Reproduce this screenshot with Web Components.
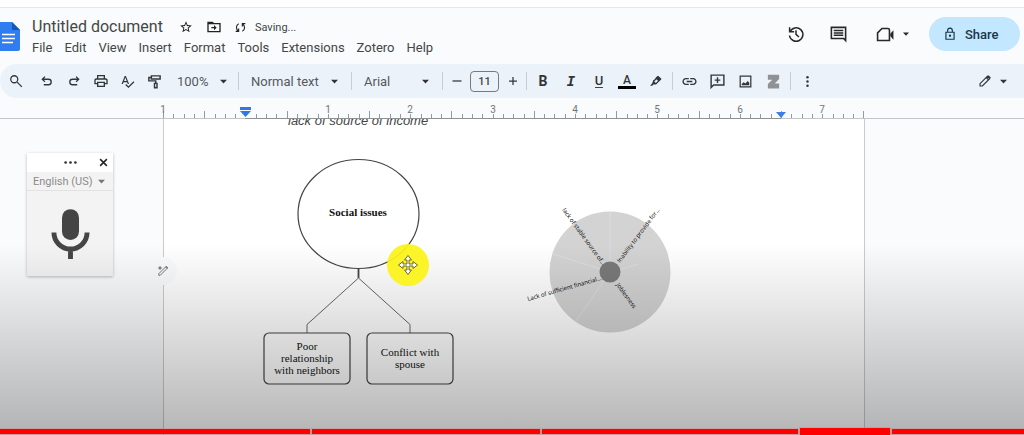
<!DOCTYPE html>
<html lang="en">
<head>
<meta charset="utf-8">
<title>Untitled document</title>
<style>
html,body{margin:0;height:100%;overflow:hidden}
body{font-family:Roboto,"Liberation Sans",sans-serif;font-size:13px;color:#444746;background:#f9fbfd}
</style>
</head>
<body>
<docs-app></docs-app>
<script>
const define = (name, html, setup) => {
  const tpl = document.createElement('template');
  tpl.innerHTML = html;
  customElements.define(name, class extends HTMLElement {
    connectedCallback() {
      if (this.shadowRoot) return;
      this.attachShadow({mode: 'open'}).append(tpl.content.cloneNode(true));
      if (setup) setup(this, this.shadowRoot);
    }
  });
};
const stroke = (d, w = 2) => `<path d="${d}" fill="none" stroke="currentColor" stroke-width="${w}"/>`;
const fill = d => `<path d="${d}"/>`;
const ICONS = {
  star: fill('M22 9.24l-7.19-.62L12 2 9.19 8.63 2 9.24l5.46 4.73L5.82 21 12 17.27 18.18 21l-1.63-7.03L22 9.24zM12 15.4l-3.76 2.27 1-4.28-3.32-2.88 4.38-.38L12 6.1l1.71 4.04 4.38.38-3.32 2.88 1 4.28L12 15.4z'),
  folder: fill('M20 6h-8l-2-2H2v16h20V6zm0 12H4V8h16v10zM12 17l4-4-4-4v3H8v2h4z'),
  sync: stroke('M8 4C1.500 7.500 2 15.500 7 19.500M1.500 20.500H8V14M16 20C22.500 16.500 22 8.500 17 4.500M22.500 3.500H16V10', 2.4),
  history: stroke('M3.500 3v6h6M4 9a9 9 0 1 1-.7 5M12 7v5.500l4 3.500'),
  comment: fill('M22 2H2v16h16l4 4V2zM20 4v13.170L18.830 16H4V4h16zM6 12h12v2H6zm0-3h12v2H6zm0-3h12v2H6z'),
  video: stroke('M7.500 4.500H15a2 2 0 0 1 2 2V19.500H2V10z') + fill('M18 11l4-4.500v12L18 14z'),
  lock: stroke('M5 9h14v12H5zM8 9V6a4 4 0 0 1 8 0v3') + '<circle cx="12" cy="15" r="2"/>',
  search: stroke('M14 14l8 8', 2.200) + '<circle cx="9" cy="9" r="6" fill="none" stroke="currentColor" stroke-width="2.200"/>',
  undo: stroke('M8.500 4.500L4 9l4.500 4.500M4 9h10.500a4.700 4.700 0 0 1 0 9.400H6.500', 2.300),
  redo: stroke('M15.500 4.500L20 9l-4.500 4.500M20 9H9.500a4.700 4.700 0 0 0 0 9.400H17.500', 2.300),
  print: fill('M19 8h-1V3H6v5H5c-1.66 0-3 1.34-3 3v6h4v4h12v-4h4v-6c0-1.66-1.34-3-3-3zM8 5h8v3H8V5zm8 14H8v-4h8v4zm2-4v-2H6v2H4v-4c0-.55.45-1 1-1h14c.55 0 1 .45 1 1v4h-2z'),
  spell: fill('M12.45 16h2.09L9.43 3H7.57L2.46 16h2.09l1.12-3h5.64l1.14 3zm-6.02-5L8.500 5.480 10.570 11H6.430zm15.160.590l-8.090 8.090L9.830 16l-1.410 1.410 5.090 5.090L23 13l-1.410-1.410z'),
  paint: stroke('M7 3h14v5H7zM7 5.500H3V11h11v4M12 15h4v7h-4z', 2.300),
  minus: stroke('M3 12h18', 2.500),
  plus: stroke('M4 12h16M12 4v16', 2.500),
  marker: stroke('M9 11L17 3l4.500 4.500L13.500 15.500z', 2.400) + fill('M15.500 2l6.500 6-4 4-6.500-6zM8 9l7 7-3 1.500H8L6 20H2l4-5z') + '<path d="M10.500 11.500l2.500 2.500" stroke="#ecf2fa" stroke-width="2"/>',
  link: fill('M3.900 12c0-1.710 1.390-3.100 3.100-3.100h4V7H7c-2.760 0-5 2.240-5 5s2.240 5 5 5h4v-1.900H7c-1.710 0-3.100-1.390-3.100-3.100zM8 13h8v-2H8v2zm9-6h-4v1.900h4c1.710 0 3.100 1.390 3.100 3.100s-1.390 3.100-3.100 3.100h-4V17h4c2.760 0 5-2.240 5-5s-2.240-5-5-5z'),
  addcomment: stroke('M3 3h18v14H6.500L3 20.500zM12 6v8M8 10h8'),
  image: stroke('M3.500 3.500h17v17h-17z') + fill('M6 18v-2l3-3 3 2 3.500-4L18 14v4z'),
  zotero: fill('M3 1h18v7l-7 7h7v8H3v-7l7-7H3z'),
  more: '<circle cx="12" cy="4" r="2.300"/><circle cx="12" cy="12" r="2.300"/><circle cx="12" cy="20" r="2.300"/>',
  dots: '<circle cx="3" cy="12" r="2.500"/><circle cx="12" cy="12" r="2.500"/><circle cx="21" cy="12" r="2.500"/>',
  pencil: stroke('M3.500 20.500v-4L16 4l4 4L7.500 20.500zM14 6l4 4', 2) + fill('M16 3.500l2-1.500 4 4-2 2z'),
  close: stroke('M3 3l18 18M21 3L3 21', 4),
  arrow: fill('M0 6h24L12 19z'),
  wand: stroke('M3.500 20.500v-3L17 4l3 3L6.500 20.500z', 2) + fill('M6 1l1.500 3.500L11 6 7.500 7.500 6 11 4.500 7.500 1 6l3.500-1.500zM16 3l3-1 3 3-1 3z'),
  mic: '<rect x="8" y="1" width="8" height="14.500" rx="4"/>' + stroke('M4.200 12a7.800 7.800 0 0 0 15.600 0M12 19.500V24.500', 2.300)
};
define('doc-icon', `<style>:host{display:inline-flex;flex:none}svg{display:block;fill:currentColor;overflow:visible}</style><svg viewBox="0 0 24 24" aria-hidden="true"></svg>`, (el, root) => {
  const svg = root.querySelector('svg'), s = el.getAttribute('size') || 16;
  svg.setAttribute('width', s); svg.setAttribute('height', s);
  svg.innerHTML = ICONS[el.getAttribute('name')];
});
define('tool-button', `<style>
:host{display:flex;flex:none;width:var(--tool-width,28px);height:28px}
button{flex:1;display:flex;align-items:center;justify-content:center;gap:8px;padding:0;border:0;background:none;font:inherit;color:inherit}
</style><button type="button"><slot></slot></button>`, (el, root) => root.querySelector('button').setAttribute('aria-label', el.getAttribute('label')));
define('drop-down', `<style>
:host{display:grid;align-items:center;flex:none}
select,doc-icon{grid-area:1/1}
select{appearance:none;width:100%;height:100%;border:0;background:none;margin:0;padding:0 20px 0 var(--pad,12px);font:inherit;color:inherit;border-radius:0}
doc-icon{justify-self:end;margin-right:var(--end,13px);pointer-events:none;color:var(--arrow,#333)}
</style><select><option></option></select><doc-icon name="arrow" size="7"></doc-icon>`, (el, root) => {
  root.querySelector('select').setAttribute('aria-label', el.getAttribute('label'));
  root.querySelector('option').textContent = el.getAttribute('value');
});
define('docs-header', `<style>
:host{display:flex;align-items:flex-start;height:56px;border-top:1px solid #e6e7ea;padding-right:4px}
.logo{flex:none;width:20px;height:30px;margin:14px 12px 0 0}
.main{flex:1}
.title{display:flex;align-items:center;height:20px;margin-top:9px}
h1{margin:0 16px 0 0;font-size:16px;line-height:20px;font-weight:400}
.title doc-icon{margin-right:13px;color:#222}
.title doc-icon.sync{margin-right:9px}
.status{font-size:11px}
nav{display:flex;gap:12px;margin-top:3px;line-height:16px}
nav a{color:inherit;text-decoration:none}
.actions{display:flex;align-items:center;height:34px;margin-top:9px;color:#262829}
.actions tool-button{--tool-width:42px}
.actions .meet{--tool-width:56px;margin-left:5px}
.share{display:flex;align-items:center;gap:8px;height:34px;width:91px;padding:0 0 0 14px;margin-left:9px;border:0;border-radius:17px;background:#c2e7ff;font:500 13px Roboto,sans-serif;color:#1b3549}
</style>
<svg class="logo" viewBox="0 0 20 30"><path d="M0 0h12l8 8v19a2 2 0 0 1-2 2H0z" fill="#2f7df0"/><path d="M12 0l8 8h-8z" fill="#1457b8"/><path d="M2 12.500h13M2 16.500h13M2 20.500h11" stroke="#fff" stroke-width="1.500"/></svg>
<div class="main">
<div class="title"><h1>Untitled document</h1><doc-icon name="star" size="14"></doc-icon><doc-icon name="folder" size="16"></doc-icon><doc-icon class="sync" name="sync" size="11"></doc-icon><span class="status">Saving...</span></div>
<nav><a href="#">File</a><a href="#">Edit</a><a href="#">View</a><a href="#">Insert</a><a href="#">Format</a><a href="#">Tools</a><a href="#">Extensions</a><a href="#">Zotero</a><a href="#">Help</a></nav>
</div>
<div class="actions">
<tool-button label="Version history"><doc-icon name="history" size="18"></doc-icon></tool-button>
<tool-button label="Comments"><doc-icon name="comment" size="19"></doc-icon></tool-button>
<tool-button class="meet" label="Join a call"><doc-icon name="video" size="19"></doc-icon><doc-icon name="arrow" size="6"></doc-icon></tool-button>
<button class="share" type="button"><doc-icon name="lock" size="14"></doc-icon>Share</button>
</div>`);
define('docs-toolbar', `<style>
:host{display:flex;align-items:center;height:34px;background:#ecf2fa;border-radius:17px 0 0 17px;padding:0 14px 0 2px;color:#333639}
.history{--tool-width:27px;display:flex}
.search{margin-right:3px}
.zoom{width:70px;--pad:9px;--end:11px}
drop-down{height:28px;color:#55595c}
.style{width:112px}.font{width:90px}
.rule{flex:none;width:1px;height:18px;background:#c9cdd2}
.size{display:flex;align-items:center;--tool-width:27px}
input{box-sizing:border-box;width:29px;height:21px;margin:0;padding:0;border:1px solid #777b7e;border-radius:4px;background:none;text-align:center;font:500 11px Roboto,sans-serif;color:#444746}
.group{display:flex;padding:0 3px 0 2px}
.b{font:700 14px Roboto,sans-serif}
.i{font:italic 700 14px "DejaVu Sans Mono",monospace}
.u{font:500 13px Roboto,sans-serif;line-height:13px;border-bottom:1px solid #444}
.a{font:500 12px Roboto,sans-serif;line-height:12px;border-bottom:3px solid #000;width:18px;text-align:center}
.z{color:#8f9193}
.mode{--tool-width:36px;margin-left:auto}
</style>
<tool-button class="search" label="Search the menus"><doc-icon name="search" size="14"></doc-icon></tool-button>
<div class="history">
<tool-button label="Undo"><doc-icon name="undo" size="14"></doc-icon></tool-button>
<tool-button label="Redo"><doc-icon name="redo" size="14"></doc-icon></tool-button>
<tool-button label="Print"><doc-icon name="print" size="16"></doc-icon></tool-button>
<tool-button label="Spelling"><doc-icon name="spell" size="15"></doc-icon></tool-button>
<tool-button label="Paint format"><doc-icon name="paint" size="15"></doc-icon></tool-button></div>
<drop-down class="zoom" label="Zoom" value="100%"></drop-down><span class="rule"></span>
<drop-down class="style" label="Styles" value="Normal text"></drop-down><span class="rule"></span>
<drop-down class="font" label="Font" value="Arial"></drop-down><span class="rule"></span>
<div class="size"><tool-button label="Decrease font size"><doc-icon name="minus" size="12"></doc-icon></tool-button><input aria-label="Font size" value="11"><tool-button label="Increase font size"><doc-icon name="plus" size="12"></doc-icon></tool-button></div><span class="rule"></span>
<div class="group">
<tool-button label="Bold"><span class="b">B</span></tool-button>
<tool-button label="Italic"><span class="i">I</span></tool-button>
<tool-button label="Underline"><span class="u">U</span></tool-button>
<tool-button label="Text color"><span class="a">A</span></tool-button>
<tool-button label="Highlight color"><doc-icon name="marker" size="13"></doc-icon></tool-button></div><span class="rule"></span>
<div class="group">
<tool-button label="Insert link"><doc-icon name="link" size="17"></doc-icon></tool-button>
<tool-button label="Add comment"><doc-icon name="addcomment" size="17"></doc-icon></tool-button>
<tool-button label="Insert image"><doc-icon name="image" size="15"></doc-icon></tool-button>
<tool-button class="z" label="Zotero"><doc-icon name="zotero" size="15"></doc-icon></tool-button></div><span class="rule"></span>
<div class="group"><tool-button label="More"><doc-icon name="more" size="13"></doc-icon></tool-button></div>
<tool-button class="mode" label="Editing mode"><doc-icon name="pencil" size="14"></doc-icon><doc-icon name="arrow" size="7"></doc-icon></tool-button>`);
define('docs-ruler', `<style>
:host{display:flex;justify-content:center;height:20px;border-bottom:1px solid #c3c6c9;padding-left:4px}
svg{flex:none;display:block;overflow:visible}
text{font:10px Roboto,sans-serif;fill:#70757a;text-anchor:middle}
</style><svg width="702" height="20"></svg>`, (el, root) => {
  const inch = 82.4; let s = '';
  for (let k = 0; k <= 68; k++) {
    if (k === 8) continue;
    const x = Math.round(k * inch / 8) + .5, h = k === 0 || k === 68 || k % 8 === 4 ? 7 : 4;
    s += `<path d="M${x} ${20 - h}V20" stroke="#95999c"/>`;
  }
  [1, '', 1, 2, 3, 4, 5, 6, 7].forEach((n, i) => { if (n) s += `<text x="${Math.round(i * inch)}" y="15">${n}</text>`; });
  s += '<path d="M82 20.500H618" stroke="#8d9194"/><path d="M77 9h11v3H77zM77 13h11l-5.500 6z" fill="#2f78e8"/><path d="M613 14h10l-5 6z" fill="#3f7de8"/>';
  root.querySelector('svg').innerHTML = s;
});
define('voice-card', `<style>
:host{display:flex;flex-direction:column;width:86px;background:#f3f3f3;box-shadow:0 1px 3px #0004;color:#333}
.bar{display:grid;grid-template-columns:1fr auto 1fr;align-items:center;height:19px;background:#fff;padding:0 5px}
.bar doc-icon{grid-column:2}
.close{grid-column:3;justify-self:end;display:flex;border:0;padding:0;background:none;color:inherit}
.close doc-icon{color:#222}
drop-down{height:18px;border-bottom:1px solid #e2e2e2;color:#8b8b8b;font-size:11px;--pad:6px;--end:8px;--arrow:#777}
.mic{display:flex;justify-content:center;border:0;background:none;padding:16px 0 18px;color:#454545}
</style>
<div class="bar"><doc-icon name="dots" size="13"></doc-icon><button class="close" type="button" aria-label="Close"><doc-icon name="close" size="9"></doc-icon></button></div>
<drop-down label="Language" value="English (US)"></drop-down>
<button class="mic" type="button" aria-label="Click to speak"><doc-icon name="mic" size="51"></doc-icon></button>`);
define('issue-tree', `<style>
:host{display:block;flex:none}
svg{display:block}
text{font:11px "Liberation Serif",serif;fill:#111;text-anchor:middle}
.t{font-weight:700}
</style><svg width="192" height="228" fill="none" stroke="#444" stroke-width="1.200">
<ellipse cx="95.500" cy="56" rx="60.500" ry="54.500"/>
<path d="M95.500 110.500V120" stroke-width="1.800"/><path d="M95.500 120L44 166.500V175M95.500 120L147 166.500V175" stroke="#666" stroke-width="1"/>
<rect x="1" y="175" width="86" height="51" rx="5"/><rect x="104" y="175" width="86" height="51" rx="5"/>
<g stroke="none"><text class="t" x="95" y="58">Social issues</text>
<text x="44" y="192">Poor</text><text x="44" y="204">relationship</text><text x="44" y="216">with neighbors</text>
<text x="147" y="198">Conflict with</text><text x="147" y="210">spouse</text></g></svg>`);
define('cause-wheel', `<style>
:host{display:block;flex:none}
svg{display:block;overflow:visible}
text{font:6px "Open Sans",sans-serif;fill:#000}
</style><svg width="150" height="130">
<circle cx="86" cy="67" r="60.500" fill="#d3d3d3"/>
<path d="M86 67V6.500M86 67L29 49M86 67L52 116M86 67L115 59" stroke="#dadada" stroke-width="1.500"/>
<circle cx="86" cy="67" r="10.500" fill="#7a7a7a"/>
<g>
<text transform="translate(38 5) rotate(54)">lack of stable source of...</text>
<text transform="translate(96 58) rotate(-53)">Inability to provide for...</text>
<text transform="translate(92 80) rotate(54)">Joblesness</text>
<text transform="translate(4 96) rotate(-16)">Lack of sufficient financial...</text></g></svg>`);
define('docs-canvas', `<style>
:host{display:block;position:relative;flex:1;min-height:0;overflow:hidden}
.holder{display:flex;justify-content:center;height:100%;padding-left:4px}
article{box-sizing:border-box;position:relative;width:702px;height:100%;background:#fff;border:solid #c9cbcd;border-width:0 1px}
p{margin:-6px 0 0 124px;font:italic 13px/16px "Liberation Sans",sans-serif;color:#444}
.figures{display:flex;align-items:flex-start;gap:69px;padding:29px 0 0 99px}
cause-wheel{margin-top:47px}
voice-card{position:absolute;left:27px;top:34px}
.assist{position:absolute;left:-15px;top:138px;width:28px;height:28px;display:flex;align-items:center;justify-content:center;border:0;border-radius:50%;padding:0;background:#fafbfd;color:#777}
.pointer{position:absolute;left:222px;top:124px;width:44px;height:44px;z-index:2}
</style><div class="holder"><article><p>lack of source of income</p><div class="figures"><issue-tree></issue-tree><cause-wheel></cause-wheel></div>
<button class="assist" type="button" aria-label="Help me write"><doc-icon name="wand" size="12"></doc-icon></button>
<svg class="pointer" viewBox="0 0 44 44"><circle cx="22" cy="22" r="21" fill="#fbf31c" fill-opacity=".94"/><path d="M22 12.500l3.500 4.500H23v4h4v-2.500l4.500 3.500-4.500 3.500V23h-4v4h2.500L22 31.500 18.500 27H21v-4h-4v2.500L12.500 22l4.500-3.500V21h4v-4h-2.500z" fill="#fff" stroke="#5d5a1c" stroke-width=".9"/></svg>
</article></div><voice-card></voice-card>`);
define('chapter-bar', `<style>
:host{display:flex;align-items:center;gap:2px;height:8px}
i{height:5px;background:#f00;box-shadow:0 0 0 1px #d9868680}
.on{height:7px}
</style><i style="flex:310"></i><i style="flex:229"></i><i style="flex:256"></i><i class="on" style="flex:90"></i><i style="flex:132"></i>`);
define('docs-app', `<style>
:host{display:flex;flex-direction:column;position:relative;height:100vh;background:#f9fbfd}
.top{height:7px;background:#fff;flex:none}
docs-header,docs-toolbar,docs-ruler{flex:none}
.shade{position:absolute;inset:56% 0 0;background:linear-gradient(#0000,#0000004a);pointer-events:none}
chapter-bar{position:absolute;inset:auto 0 0}
</style><div class="top"></div><docs-header></docs-header><docs-toolbar></docs-toolbar><docs-ruler></docs-ruler><docs-canvas></docs-canvas><div class="shade"></div><chapter-bar></chapter-bar>`);
</script>
</body>
</html>
